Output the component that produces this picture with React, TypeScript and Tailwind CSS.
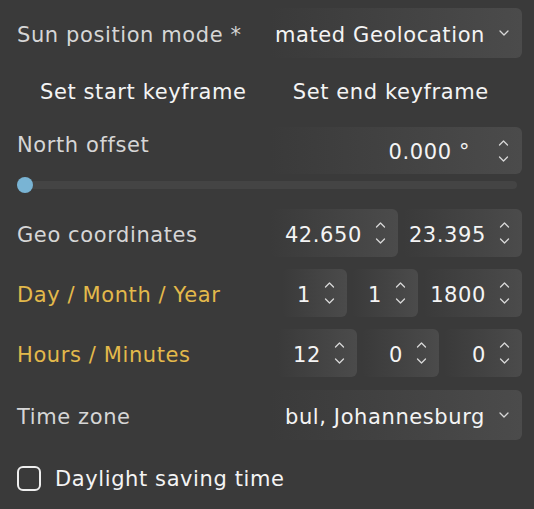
import React from 'react'

const font = { fontFamily: '"DejaVu Sans", Verdana, sans-serif' }

function Chevron({ up = false, small = false }: { up?: boolean; small?: boolean }) {
  const w = small ? 10 : 11
  return (
    <svg width={w} height={6} viewBox="0 0 10 6" fill="none" className="block">
      <path
        d={up ? 'M1 5L5 1L9 5' : 'M1 1L5 5L9 1'}
        stroke="#d8d8d8"
        strokeWidth={1.3}
        strokeLinecap="round"
        strokeLinejoin="round"
      />
    </svg>
  )
}

function Spinner() {
  return (
    <div className="flex flex-col items-center gap-[10px] w-[12px]">
      <Chevron up />
      <Chevron />
    </div>
  )
}

function NumberBox({ value, className = '', gap = 'mr-[12px]' }: { value: string; className?: string; gap?: string }) {
  return (
    <div
      className={`flex h-full items-center justify-end rounded-[6px] bg-gradient-to-r from-[#3a3a3a] to-[#4b4b4b] pr-[12px] ${className}`}
    >
      <span className={`${gap} pt-[5px] text-[21px] tracking-[0.6px] text-[#f4f4f4] whitespace-nowrap`}>{value}</span>
      <Spinner />
    </div>
  )
}

function SelectBox({ value }: { value: string }) {
  return (
    <div className="flex h-full w-[252px] items-center justify-end overflow-hidden rounded-[6px] bg-gradient-to-r from-[#3a3a3a] to-[#4b4b4b] pr-[13px]">
      <span className="mr-[14px] pt-[5px] text-[21px] tracking-[0.6px] text-[#f4f4f4] whitespace-nowrap">{value}</span>
      <Chevron small />
    </div>
  )
}

function Label({ children, gold = false, pad = 'pt-[5px]' }: { children: React.ReactNode; gold?: boolean; pad?: string }) {
  return (
    <div
      className={`flex-1 ${pad} text-[21px] tracking-[0.6px] whitespace-nowrap ${gold ? 'text-[#e3b94b]' : 'text-[#d6d6d6]'}`}
    >
      {children}
    </div>
  )
}

export default function App() {
  return (
    <div className="min-h-screen w-full bg-[#3a3a3a] pl-[17px] pr-[12px] pt-[8px]" style={font}>
      {/* Sun position mode */}
      <div className="flex h-[50px] items-center">
        <Label>Sun position mode *</Label>
        <SelectBox value="mated Geolocation" />
      </div>

      {/* Keyframe buttons */}
      <div className="grid h-[64px] grid-cols-2 items-center pt-[5px] text-[21px] tracking-[0.6px] text-[#f4f4f4]">
        <button className="text-center">Set start keyframe</button>
        <button className="pr-[10px] text-center">Set end keyframe</button>
      </div>

      {/* North offset */}
      <div className="mt-[5px] flex h-[47px]">
        <Label pad="pt-[3px]">North offset</Label>
        <div className="h-full w-[252px]">
          <NumberBox value="0.000 °" className="pr-[13px]" gap="mr-[27px]" />
        </div>
      </div>

      {/* Slider */}
      <div className="relative flex h-[22px] items-center pr-[5px]">
        <div className="h-[8px] w-full rounded-full bg-[#444444]" />
        <div className="absolute left-0 top-[3px] h-[16px] w-[16px] rounded-full bg-[#79b4d4]" />
      </div>

      {/* Geo coordinates */}
      <div className="mt-[13px] flex h-[48px] items-center">
        <Label>Geo coordinates</Label>
        <div className="flex h-full gap-[5px]">
          <NumberBox value="42.650" className="w-[128px]" />
          <NumberBox value="23.395" className="w-[119px]" />
        </div>
      </div>

      {/* Day / Month / Year */}
      <div className="mt-[12px] flex h-[48px] items-center">
        <Label gold>Day / Month / Year</Label>
        <div className="flex h-full gap-[5px]">
          <NumberBox value="1" className="w-[65px]" />
          <NumberBox value="1" className="w-[66px]" />
          <NumberBox value="1800" className="w-[99px]" />
        </div>
      </div>

      {/* Hours / Minutes */}
      <div className="mt-[12px] flex h-[48px] items-center">
        <Label gold>Hours / Minutes</Label>
        <div className="flex h-full gap-[5px]">
          <NumberBox value="12" className="w-[80px]" />
          <NumberBox value="0" className="w-[77px]" />
          <NumberBox value="0" className="w-[78px]" />
        </div>
      </div>

      {/* Time zone */}
      <div className="mt-[13px] flex h-[50px] items-center">
        <Label>Time zone</Label>
        <SelectBox value="bul, Johannesburg" />
      </div>

      {/* Daylight saving */}
      <label className="mt-[25px] flex h-[26px] items-center gap-[14px]">
        <span className="h-[25px] w-[24px] rounded-[6px] border-2 border-[#eeeeee]" />
        <span className="pt-[4px] text-[21px] tracking-[0.6px] text-[#f4f4f4]">Daylight saving time</span>
      </label>
    </div>
  )
}
